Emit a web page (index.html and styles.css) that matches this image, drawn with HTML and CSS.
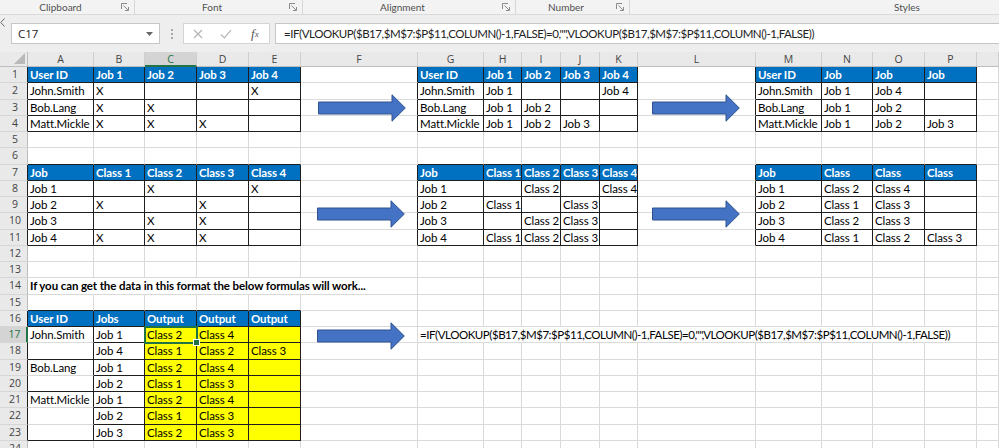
FILE: index.html
```html
<!DOCTYPE html>
<html lang="en">
<head>
  <meta charset="UTF-8">
  <meta name="viewport" content="width=device-width, initial-scale=1.0">
  <title>Book1 - Excel</title>
  <link rel="stylesheet" href="styles.css">
</head>
<body>
  <div class="ribbon">
    <div class="group g-clip">
      <span class="label">Clipboard</span>
      <svg class="launch" width="8" height="8" viewBox="0 0 8 8"><path d="M0.5 6V0.5H6M2.5 2.5L7 7M7.5 4V7.5H4" fill="none" stroke="#8c8c8c"/></svg>
    </div>
    <div class="group g-font">
      <span class="label">Font</span>
      <svg class="launch" width="8" height="8" viewBox="0 0 8 8"><path d="M0.5 6V0.5H6M2.5 2.5L7 7M7.5 4V7.5H4" fill="none" stroke="#8c8c8c"/></svg>
    </div>
    <div class="group g-align">
      <span class="label">Alignment</span>
      <svg class="launch" width="8" height="8" viewBox="0 0 8 8"><path d="M0.5 6V0.5H6M2.5 2.5L7 7M7.5 4V7.5H4" fill="none" stroke="#8c8c8c"/></svg>
    </div>
    <div class="group g-num">
      <span class="label">Number</span>
      <svg class="launch" width="8" height="8" viewBox="0 0 8 8"><path d="M0.5 6V0.5H6M2.5 2.5L7 7M7.5 4V7.5H4" fill="none" stroke="#8c8c8c"/></svg>
    </div>
    <div class="group g-styles">
      <span class="label">Styles</span>
    </div>
  </div>

  <div class="fbar">
    <svg class="collapse" width="5" height="9" viewBox="0 0 5 9"><path d="M4.5 0.5L0.8 4.5L4.5 8.5" fill="none" stroke="#666"/></svg>
    <div class="namebox">
      <span>C17</span>
      <svg width="7" height="4" viewBox="0 0 7 4"><path d="M0 0H7L3.5 4Z" fill="#666"/></svg>
    </div>
    <div class="grip">
      <svg width="2" height="10" viewBox="0 0 2 10"><rect x="0" y="0" width="2" height="2" fill="#a8a8a8"/><rect x="0" y="4" width="2" height="2" fill="#a8a8a8"/><rect x="0" y="8" width="2" height="2" fill="#a8a8a8"/></svg>
    </div>
    <div class="fx-btns">
      <span class="btn"><svg width="10" height="10" viewBox="0 0 10 10"><path d="M1 1L9 9M9 1L1 9" stroke="#b4b4b4" stroke-width="1.2"/></svg></span>
      <span class="btn"><svg width="12" height="10" viewBox="0 0 12 10"><path d="M1 5.5L4.3 8.8L11 1.2" fill="none" stroke="#b4b4b4" stroke-width="1.2"/></svg></span>
      <span class="btn fx"><i>f</i><sub>x</sub></span>
    </div>
    <div class="formula">=IF(VLOOKUP($B17,$M$7:$P$11,COLUMN()-1,FALSE)=0,"",VLOOKUP($B17,$M$7:$P$11,COLUMN()-1,FALSE))</div>
  </div>

  <div class="sheet-wrap">
    <div class="sheet" id="sheet"></div>

    <svg class="arrow ar1" width="88" height="28" viewBox="0 0 88 28"><path d="M0.5 8H74V0.8L87.3 14L74 27.2V20H0.5Z" fill="#4472c4" stroke="#2f528f"/></svg>
    <svg class="arrow ar2" width="88" height="28" viewBox="0 0 88 28"><path d="M0.5 8H74V0.8L87.3 14L74 27.2V20H0.5Z" fill="#4472c4" stroke="#2f528f"/></svg>
    <svg class="arrow ar3" width="88" height="28" viewBox="0 0 88 28"><path d="M0.5 8H74V0.8L87.3 14L74 27.2V20H0.5Z" fill="#4472c4" stroke="#2f528f"/></svg>
    <svg class="arrow ar4" width="88" height="28" viewBox="0 0 88 28"><path d="M0.5 8H74V0.8L87.3 14L74 27.2V20H0.5Z" fill="#4472c4" stroke="#2f528f"/></svg>
    <svg class="arrow ar5" width="88" height="28" viewBox="0 0 88 28"><path d="M0.5 8H74V0.8L87.3 14L74 27.2V20H0.5Z" fill="#4472c4" stroke="#2f528f"/></svg>
  </div>

  <script>
    const COLS = 'ABCDEFGHIJKLMNOP';
    const ROWS = 24;
    const FORMULA = '=IF(VLOOKUP($B17,$M$7:$P$11,COLUMN()-1,FALSE)=0,"",VLOOKUP($B17,$M$7:$P$11,COLUMN()-1,FALSE))';

    const tables = [
      { col: 'A', row: 1, rows: [
        ['User ID', 'Job 1', 'Job 2', 'Job 3', 'Job 4'],
        ['John.Smith', 'X', '', '', 'X'],
        ['Bob.Lang', 'X', 'X', '', ''],
        ['Matt.Mickle', 'X', 'X', 'X', '']
      ]},
      { col: 'A', row: 7, rows: [
        ['Job', 'Class 1', 'Class 2', 'Class 3', 'Class 4'],
        ['Job 1', '', 'X', '', 'X'],
        ['Job 2', 'X', '', 'X', ''],
        ['Job 3', '', 'X', 'X', ''],
        ['Job 4', 'X', 'X', 'X', '']
      ]},
      { col: 'G', row: 1, rows: [
        ['User ID', 'Job 1', 'Job 2', 'Job 3', 'Job 4'],
        ['John.Smith', 'Job 1', '', '', 'Job 4'],
        ['Bob.Lang', 'Job 1', 'Job 2', '', ''],
        ['Matt.Mickle', 'Job 1', 'Job 2', 'Job 3', '']
      ]},
      { col: 'G', row: 7, rows: [
        ['Job', 'Class 1', 'Class 2', 'Class 3', 'Class 4'],
        ['Job 1', '', 'Class 2', '', 'Class 4'],
        ['Job 2', 'Class 1', '', 'Class 3', ''],
        ['Job 3', '', 'Class 2', 'Class 3', ''],
        ['Job 4', 'Class 1', 'Class 2', 'Class 3', '']
      ]},
      { col: 'M', row: 1, rows: [
        ['User ID', 'Job', 'Job', 'Job'],
        ['John.Smith', 'Job 1', 'Job 4', ''],
        ['Bob.Lang', 'Job 1', 'Job 2', ''],
        ['Matt.Mickle', 'Job 1', 'Job 2', 'Job 3']
      ]},
      { col: 'M', row: 7, rows: [
        ['Job', 'Class', 'Class', 'Class'],
        ['Job 1', 'Class 2', 'Class 4', ''],
        ['Job 2', 'Class 1', 'Class 3', ''],
        ['Job 3', 'Class 2', 'Class 3', ''],
        ['Job 4', 'Class 1', 'Class 2', 'Class 3']
      ]},
      { col: 'A', row: 16, rows: [
        ['User ID', 'Jobs', 'Output', 'Output', 'Output'],
        ['John.Smith', 'Job 1', 'Class 2', 'Class 4', ''],
        ['', 'Job 4', 'Class 1', 'Class 2', 'Class 3'],
        ['Bob.Lang', 'Job 1', 'Class 2', 'Class 4', ''],
        ['', 'Job 2', 'Class 1', 'Class 3', ''],
        ['Matt.Mickle', 'Job 1', 'Class 2', 'Class 4', ''],
        ['', 'Job 2', 'Class 1', 'Class 3', ''],
        ['', 'Job 3', 'Class 2', 'Class 3', '']
      ]}
    ];

    const values = {};
    const inTable = new Set();
    const header = new Set();

    tables.forEach(t => {
      const c0 = COLS.indexOf(t.col);
      t.rows.forEach((vals, i) => {
        vals.forEach((v, j) => {
          const key = COLS[c0 + j] + (t.row + i);
          inTable.add(key);
          if (i === 0) header.add(key);
          if (v) values[key] = v;
        });
      });
    });

    values['A14'] = 'If you can get the data in this format the below formulas will work...';
    values['G17'] = FORMULA;

    const spans = { A14: 6, G17: 10 };
    const bold = new Set(['A14']);
    // user id groups in the last table are boxed together
    const openBottom = new Set(['A17', 'A19', 'A21', 'A22']);

    function isYellow(c, r) {
      return r >= 17 && r <= 23 && c >= 2 && c <= 4;
    }
    function inT(r, c) {
      return c >= 0 && c < COLS.length && inTable.has(COLS[c] + r);
    }

    const sheet = document.getElementById('sheet');
    function add(cls, text) {
      const d = document.createElement('div');
      d.className = cls;
      if (text !== undefined) d.textContent = text;
      sheet.appendChild(d);
      return d;
    }

    const corner = add('corner');
    corner.innerHTML = '<svg width="11" height="11" viewBox="0 0 11 11"><path d="M11 0V11H0Z" fill="#b9b9b9"/></svg>';

    for (const col of COLS) {
      add('ch' + (col === 'C' ? ' on' : ''), col);
    }
    add('ch');

    for (let r = 1; r <= ROWS; r++) {
      add('rh' + (r === 17 ? ' on' : '') + (inT(r, 0) ? ' br' : ''), r);
      let skip = 0;
      for (let c = 0; c < COLS.length; c++) {
        if (skip > 0) { skip--; continue; }
        const key = COLS[c] + r;
        const span = spans[key] || 1;
        skip = span - 1;

        const cls = ['cell'];
        if (span > 1) cls.push('span' + span);
        if (header.has(key)) cls.push('hd');
        if (isYellow(c, r)) cls.push('yel');
        if (bold.has(key)) cls.push('bold');
        if (key === 'C17') cls.push('sel');

        if (inT(r, c + span - 1) || inT(r, c + span)) cls.push('br');
        let below = false;
        for (let k = c; k < c + span; k++) {
          if (inT(r, k) || inT(r + 1, k)) below = true;
        }
        if (below && !openBottom.has(key)) cls.push('bb');

        add(cls.join(' '), values[key] || '');
      }
      add('cell');
    }
  </script>
</body>
</html>
```

FILE: styles.css
```css
body {
  margin: 0;
  width: 999px;
  height: 448px;
  overflow: hidden;
  background: #fff;
  font-family: "Open Sans", sans-serif;
  color: #222;
}

/* ribbon group labels */
.ribbon {
  display: flex;
  height: 14px;
  background: #f3f3f3;
  border-bottom: 1px solid #dadada;
  font-family: Lato, sans-serif;
  font-size: 10px;
  color: #505050;
}
.group {
  display: flex;
  flex-shrink: 0;
  align-items: center;
  box-sizing: border-box;
  border-right: 1px solid #d6d6d6;
}
.g-clip { width: 135px; }
.g-font { width: 168px; }
.g-align { width: 213px; }
.g-num { width: 114px; }
.g-styles {
  flex: 1;
  padding-left: 185px;
  border-right: none;
}
.label {
  flex: 1;
  text-align: center;
  line-height: 14px;
}
.launch {
  margin-right: 5px;
}

/* formula bar */
.fbar {
  display: flex;
  align-items: center;
  height: 37px;
  background: #eeeeee;
}
.collapse {
  align-self: flex-start;
  margin-top: 3px;
}
.namebox {
  display: flex;
  flex-shrink: 0;
  align-items: center;
  justify-content: space-between;
  box-sizing: border-box;
  width: 149px;
  height: 21px;
  margin-left: 6px;
  padding: 0 6px 0 6px;
  background: #fff;
  border: 1px solid #c6c6c6;
  font-size: 11.5px;
  color: #222;
}
.grip {
  display: flex;
  flex-shrink: 0;
  justify-content: center;
  width: 23px;
}
.fx-btns {
  display: flex;
  flex-shrink: 0;
  box-sizing: border-box;
  width: 87px;
  height: 21px;
  background: #fff;
  border: 1px solid #d4d4d4;
}
.btn {
  display: flex;
  align-items: center;
  justify-content: center;
  width: 29px;
}
.fx {
  font-family: "Liberation Serif", serif;
  font-size: 13px;
  color: #555;
}
.fx sub {
  font-size: 9px;
  font-style: italic;
  vertical-align: -2px;
}
.formula {
  flex: 1;
  min-width: 0;
  box-sizing: border-box;
  height: 21px;
  margin-left: 5px;
  padding-left: 8px;
  background: #fff;
  border: 1px solid #c6c6c6;
  border-right: none;
  font-family: Lato, sans-serif;
  font-size: 11.5px;
  letter-spacing: -0.45px;
  line-height: 19px;
  white-space: nowrap;
  overflow: hidden;
  color: #222;
}

/* worksheet grid */
.sheet-wrap {
  position: relative;
  width: 999px;
  height: 396px;
  overflow: hidden;
}
.sheet {
  display: grid;
  grid-template-columns: 28px 66px 51px 52px 52px 52px 117px 66px 38px 39px 39px 38px 118px 66px 51px 52px 52px 22px;
  grid-template-rows: 15px;
  grid-auto-rows: 16.26px;
  font-family: Lato, sans-serif;
  font-size: 11.5px;
  letter-spacing: -0.1px;
  color: #000;
}
.corner {
  display: flex;
  align-items: flex-end;
  justify-content: flex-end;
  padding: 0 2px 2px 0;
  background: #e9e9e9;
  border-right: 1px solid #bdbdbd;
  border-bottom: 1px solid #bdbdbd;
}
.ch, .rh {
  box-sizing: border-box;
  background: #e9e9e9;
  font-family: "Open Sans", sans-serif;
  font-size: 10.5px;
  letter-spacing: 0;
  color: #444;
  text-align: center;
}
.ch {
  line-height: 14px;
  border-right: 1px solid #cfcfcf;
  border-bottom: 1px solid #bdbdbd;
}
.rh {
  padding-left: 3px;
  line-height: 15px;
  border-right: 1px solid #bdbdbd;
  border-bottom: 1px solid #d6d6d6;
}
.ch.on {
  background: #d4d4d4;
  color: #217346;
  border-bottom: 2px solid #217346;
}
.rh.on {
  background: #d4d4d4;
  color: #217346;
  border-right: 2px solid #217346;
}
.cell {
  box-sizing: border-box;
  padding: 0 0 0 2px;
  line-height: 15px;
  white-space: nowrap;
  overflow: hidden;
  border-right: 1px solid #dadada;
  border-bottom: 1px solid #dadada;
}
.span6 { grid-column: span 6; }
.span10 {
  grid-column: span 10;
  letter-spacing: -0.45px;
}
.br { border-right-color: #1e1e1e; }
.bb { border-bottom-color: #1e1e1e; }
.hd {
  background: #0070c0;
  color: #fff;
  font-weight: bold;
}
.yel { background: #ffff00; }
.bold { font-weight: bold; }
.sel {
  position: relative;
  overflow: visible;
  outline: 2px solid #217346;
  outline-offset: -1px;
}
.sel::after {
  content: "";
  position: absolute;
  right: -4px;
  bottom: -4px;
  width: 5px;
  height: 5px;
  background: #217346;
  border: 1px solid #fff;
}

/* block arrows drawn over the sheet */
.arrow {
  position: absolute;
}
.ar1 { left: 318px; top: 42px; }
.ar2 { left: 652px; top: 42px; }
.ar3 { left: 317px; top: 148px; }
.ar4 { left: 652px; top: 148px; }
.ar5 { left: 317px; top: 270px; }
```
